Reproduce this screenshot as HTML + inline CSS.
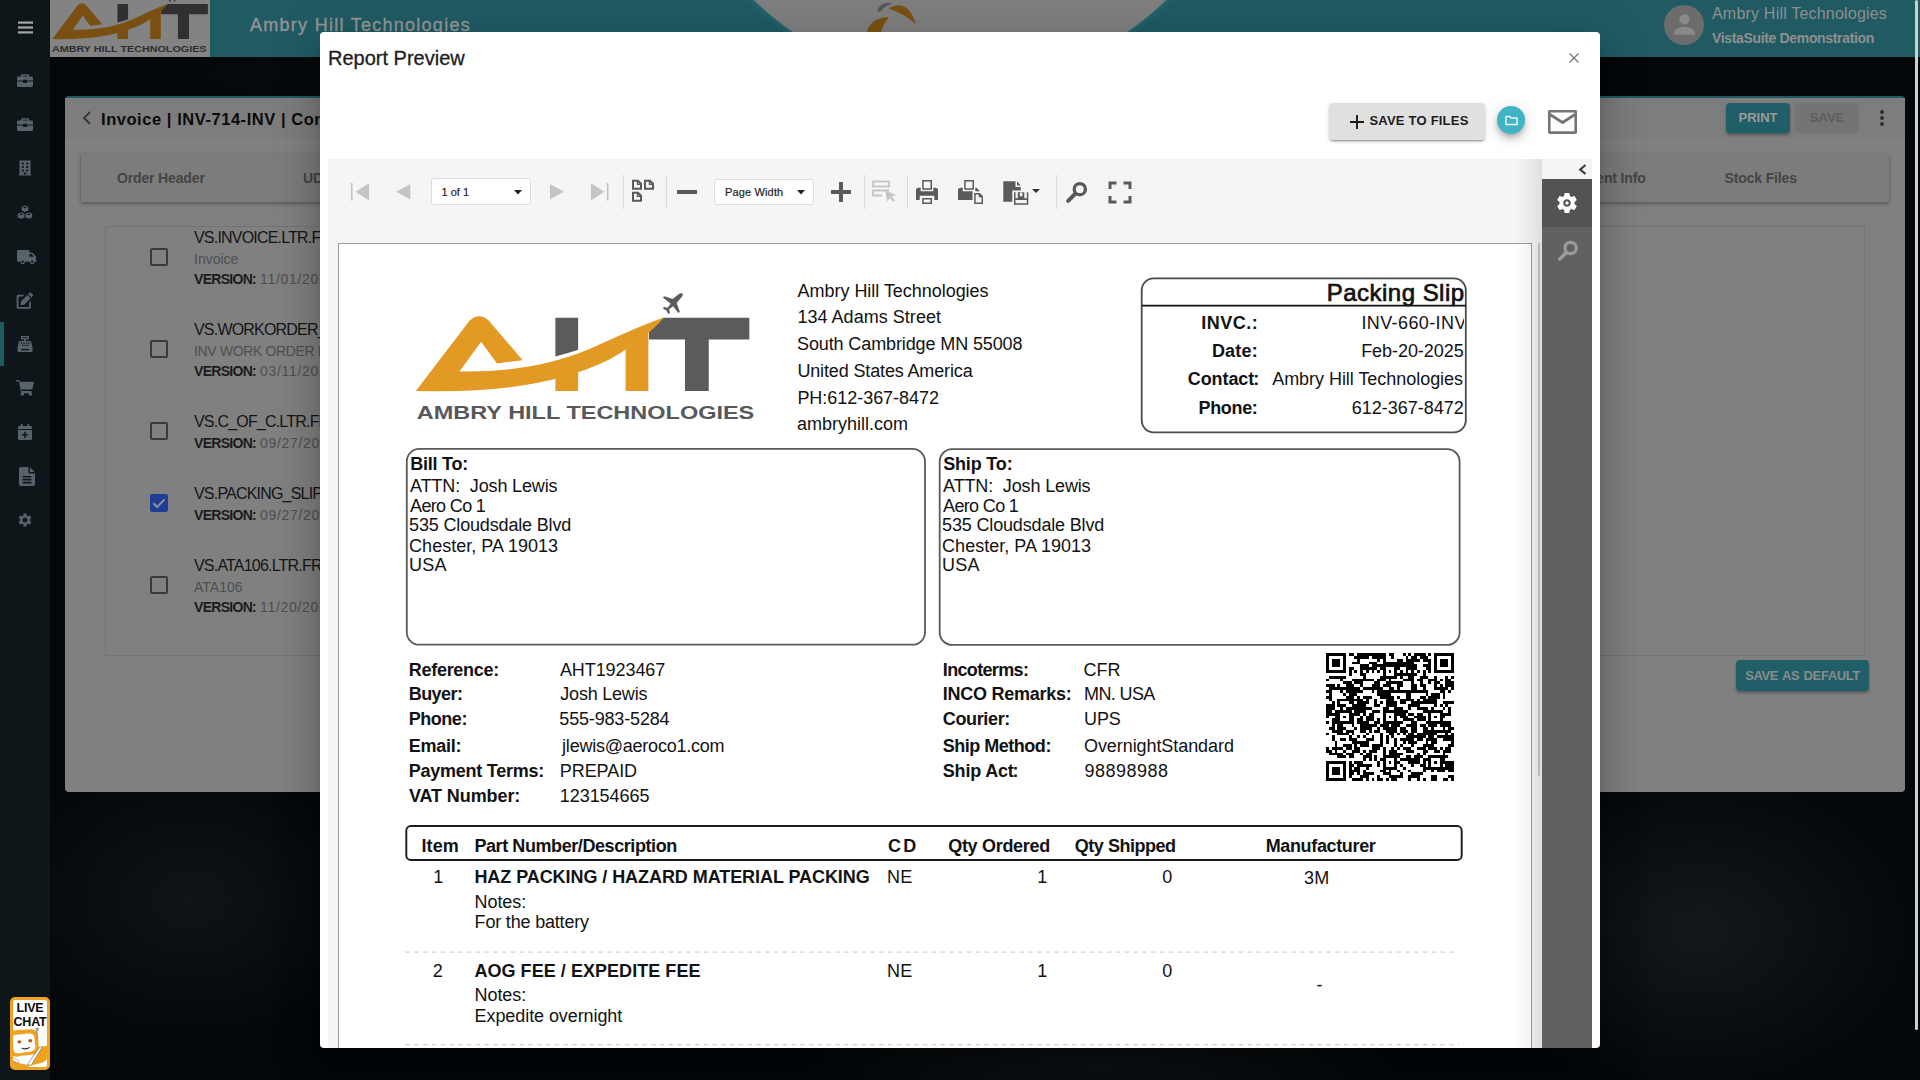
<!DOCTYPE html>
<html lang="en">
<head>
<meta charset="utf-8">
<title>Report Preview</title>
<style>
*{box-sizing:border-box;margin:0;padding:0}
html,body{width:1920px;height:1080px;overflow:hidden;background:#06090b;font-family:"Liberation Sans",sans-serif}
.abs{position:absolute}
#bg{position:absolute;left:0;top:0;width:1920px;height:1080px;background:
 radial-gradient(ellipse 230px 170px at 1700px 930px,#14181a 0%,rgba(10,13,15,0) 100%),
 radial-gradient(ellipse 200px 150px at 190px 900px,#101416 0%,rgba(6,9,11,0) 100%),
 radial-gradient(ellipse 300px 60px at 1100px 1062px,#0e1214 0%,rgba(6,9,11,0) 100%),
 radial-gradient(ellipse 500px 50px at 600px 75px,#0c1012 0%,rgba(6,9,11,0) 100%),
 #04070a}
#side{position:absolute;left:0;top:0;width:50px;height:1080px;background:#0f161a}
#hdr{position:absolute;left:50px;top:0;width:1870px;height:57px;background:#205b63;overflow:hidden}
#logoBox{position:absolute;left:0;top:0;width:160px;height:57px;background:#838383}
#hdrTitle{position:absolute;left:200px;top:15px;font-size:18px;color:#959595;white-space:nowrap;letter-spacing:1.27px;font-weight:400;-webkit-text-stroke:.35px #959595}
#card{position:absolute;left:65px;top:96px;width:1840px;height:696px;background:#808080;border-top:2px solid #1f5a63;border-radius:4px}
#cardHead{position:absolute;left:0;top:0;width:100%;height:40px;background:#7d7d7d}
#tabs{position:absolute;left:16px;top:56px;width:1808px;height:48px;background:#7c7c7c;box-shadow:0 2px 4px rgba(0,0,0,.28),0 0 2px rgba(0,0,0,.15)}
.tab{position:absolute;top:16px;font-size:14px;font-weight:700;color:#444;white-space:nowrap;letter-spacing:-.15px}
#list{position:absolute;left:40px;top:128px;width:1760px;height:430px;border:1px solid #747474}
.cb{position:absolute;margin-top:-1px;left:44px;width:18px;height:18px;border:2px solid #3a3a3a;border-radius:2px}
.cb.on{background:#1c3f95;border-color:#1c3f95}
.li{position:absolute;left:88px;white-space:nowrap}
.li.t{font-size:16px;color:#151515;letter-spacing:-.8px;margin-top:1px}
.li.s{font-size:14px;color:#4f4f4f}
.li.v{font-size:14px;color:#4f4f4f}
.li.v b{color:#1b1b1b}
.btn{position:absolute;font-weight:700;font-size:14px;text-align:center;border-radius:4px;white-space:nowrap}
#modal{position:absolute;left:320px;top:32px;width:1280px;height:1016px;background:#fff;border-radius:4px;overflow:hidden;
 box-shadow:0 11px 15px -7px rgba(0,0,0,.2),0 24px 38px 3px rgba(0,0,0,.14),0 9px 46px 8px rgba(0,0,0,.12)}
#mshadow{position:absolute;left:320px;top:32px;width:1280px;height:1016px;border-radius:4px;
 box-shadow:0 11px 15px -7px rgba(0,0,0,.2),0 24px 38px 3px rgba(0,0,0,.14),0 9px 46px 8px rgba(0,0,0,.12)}
#mtitle{position:absolute;left:328px;top:47px;font-size:20px;color:#1d1d1d;white-space:nowrap;-webkit-text-stroke:.3px #1d1d1d}
#cardTitle{left:36px;top:12px;font-size:16.500px;font-weight:700;color:#0b0b0b;white-space:nowrap;letter-spacing:.55px}
.li.v b{letter-spacing:-.7px;font-weight:700}
#mw{position:absolute;left:-320px;top:-32px;width:1920px;height:1080px}
#viewer{position:absolute;left:328px;top:159px;width:1264px;height:889px;background:#f5f5f5;overflow:hidden}
#viewer>div{position:absolute}
#tbar{left:-328px;top:-159px;width:1920px;height:1080px}
#page{left:10px;top:84px;width:1194px;height:900px;background:#fff;border:1px solid #9d9d9d}
.sep{top:175px;width:1px;height:34px;background:#dadada}
.sel{background:#fff;border:1px solid #dcdcdc;border-radius:3px;font-size:11px;color:#222}
.sel span{position:absolute;top:6px;white-space:nowrap;-webkit-text-stroke:.2px #222}
#rp{position:absolute;left:-339px;top:-244px;width:1920px;height:1080px}
.rt{position:absolute;white-space:pre;color:#121212}
.ps{-webkit-text-stroke:.7px #121212;height:26.500px;overflow:hidden;width:150px}
#rpanel{left:1214px;top:0;width:50px;height:889px;background:#616161}
</style>
</head>
<body>

<div id="bg"></div>

<!-- HEADER -->
<div id="hdr">
  <div id="logoBox">
   <svg class="dim abs" style="left:-4.900px;top:-14.300px" width="177.200" height="76.400" viewBox="0 0 1920 808" preserveAspectRatio="none"><path fill="#303031" d="M785 190H900V352Q842 372 785 386Z"/>
   <path fill="#303031" d="M1332 190H1765V300H1560V560H1440V300H1258V247Q1296 222 1332 190Z"/>
   <path fill="#303031" d="M1328 88l8-6 42 14 26-22q14-10 24-6 4 10-8 22l-22 26 16 44-8 6-26-34-20 16 4 18-8 6-10-18-18-10 6-8 18 4 16-20z"/>
   <path fill="#7a5012" d="M785 480L900 450V560H785Z"/>
   <path fill="#7a5012" d="M1140 352Q1200 312 1255 262V560H1140Z"/>
   <path fill="#7a5012" fill-rule="evenodd" d="M80 560L352 205Q400 160 448 205L620 405L490 422L410 312L300 462Q700 470 1000 330Q1180 245 1335 188Q1240 300 1060 400Q700 580 80 560Z"/>
    <text x="75" y="700" font-family="Liberation Sans, sans-serif" font-weight="700" font-size="93" textLength="1675" lengthAdjust="spacingAndGlyphs" fill="#2e2e2f">AMBRY HILL TECHNOLOGIES</text></svg>
  </div>
  <div id="hdrTitle">Ambry Hill Technologies</div>
  <div class="abs" style="left:615px;top:-506px;width:590px;height:590px;border-radius:50%;background:#7f7f7f;box-shadow:0 0 6px 1px #2b6e78"></div>
  <svg class="abs" style="left:812px;top:0" width="60" height="57" viewBox="0 0 60 57">
    <path d="M15 11.500Q19 0.500 30.500 3.500Q23 5.500 18.500 11.500Z" fill="#555"/>
    <path d="M26.500 8.500Q46 -2.500 53.500 24Q42 13.500 26.500 8.500Z" fill="#7a5113"/>
    <path d="M27 17Q2 18 4 44Q12 60 30 52Q8 42 27 17Z" fill="#7a5113"/>
  </svg>
  <div class="abs" style="left:1614px;top:5px;width:40px;height:40px;border-radius:50%;background:#6c6c6c"></div>
  <svg class="abs" style="left:1618.500px;top:9px" width="31" height="31" viewBox="0 0 24 24" fill="#8a8a8a"><path d="M12 12c2.210 0 4-1.790 4-4s-1.790-4-4-4-4 1.790-4 4 1.790 4 4 4zm0 2c-2.670 0-8 1.340-8 4v2h16v-2c0-2.660-5.330-4-8-4z"/></svg>
  <div class="abs" style="left:1662px;top:5px;font-size:16px;color:#8f8f8f;white-space:nowrap;letter-spacing:.2px">Ambry Hill Technologies</div>
  <div class="abs" style="left:1662px;top:30px;font-size:14px;font-weight:700;color:#8f8f8f;white-space:nowrap;letter-spacing:-.34px">VistaSuite Demonstration</div>
</div>

<!-- SIDEBAR -->
<div id="side">
<svg class="abs" style="left:17.5px;top:21px" width="15" height="13" viewBox="0 0 15 13"><rect x="0" y="0.500" width="15" height="2.200" fill="#a4a7a9"/><rect x="0" y="5.400" width="15" height="2.200" fill="#a4a7a9"/><rect x="0" y="10.300" width="15" height="2.200" fill="#a4a7a9"/></svg>
<svg class="abs" style="left:17.0px;top:72.0px" width="16" height="16" viewBox="0 0 16 16" fill="#57636b"><path d="M5 2.2h6a1 1 0 0 1 1 1V4.5h2.6a1.4 1.4 0 0 1 1.4 1.4V8.5H10v-.8H6v.8H0V5.9a1.4 1.4 0 0 1 1.4-1.4H4V3.200a1 1 0 0 1 1-1zM5.600 3.700v.8h4.800v-.8zM0 9.600h6v1.400h4V9.600h6v4a1.400 1.400 0 0 1-1.400 1.400H1.400A1.400 1.400 0 0 1 0 13.600z"/></svg>
<svg class="abs" style="left:17.0px;top:116.0px" width="16" height="16" viewBox="0 0 16 16" fill="#57636b"><path d="M5 2.2h6a1 1 0 0 1 1 1V4.5h2.6a1.4 1.4 0 0 1 1.4 1.4V8.5H10v-.8H6v.8H0V5.9a1.4 1.4 0 0 1 1.4-1.4H4V3.200a1 1 0 0 1 1-1zM5.600 3.700v.8h4.800v-.8zM0 9.600h6v1.400h4V9.600h6v4a1.400 1.400 0 0 1-1.400 1.400H1.400A1.400 1.400 0 0 1 0 13.600z"/></svg>
<svg class="abs" style="left:18.0px;top:160.0px" width="14" height="16" viewBox="1 0 14 16" fill="#57636b"><path fill-rule="evenodd" d="M2.500 0.500h11v14h0.800v1h-12.600v-1h0.800zM4.800 2.500v2h2v-2zM9.200 2.500v2h2v-2zM4.800 6v2h2v-2zM9.200 6v2h2v-2zM4.800 9.500v2h2v-2zM9.200 9.500v2h2v-2zM6.700 12.500v2h2.600v-2z"/></svg>
<svg class="abs" style="left:17.0px;top:204.5px" width="16" height="15" viewBox="0 0 16 15" fill="#57636b"><path d="M8 0.600l3.300 1.300v3.600l-3.300 1.400-3.300-1.400V1.900zM8 1.700l-2.100 .8 2.100 .9 2.100-.9zM4.200 7.400l3.300 1.300v3.700l-3.300 1.400-3.400-1.400V8.700zM4.200 8.500l-2.100 .8 2.100 .9 2.100-.9zM11.800 7.400l3.400 1.300v3.700l-3.400 1.400-3.300-1.400V8.700zM11.800 8.500l-2.100 .8 2.100 .9 2.100-.9z" fill-rule="evenodd"/></svg>
<svg class="abs" style="left:15.5px;top:248.0px" width="22" height="16" viewBox="0 0 20 16" fill="#57636b"><path d="M1.200 2h10a1.200 1.200 0 0 1 1.200 1.200V4.500h2.400a1.500 1.500 0 0 1 1.100 .5l2.600 2.700a1.500 1.500 0 0 1 .5 1.100V12.500h0.700v1.300h-2.200a2.300 2.300 0 0 1-4.600 0H8a2.300 2.300 0 0 1-4.600 0H1.200A1.200 1.200 0 0 1 0 12.600V3.200A1.200 1.200 0 0 1 1.200 2zM12.400 6v2.800h4.700l-2.500-2.800zM5.700 12.600a1.150 1.150 0 1 0 0 2.300 1.150 1.150 0 0 0 0-2.300zM15.200 12.600a1.150 1.150 0 1 0 0 2.300 1.150 1.150 0 0 0 0-2.300z" fill-rule="evenodd"/></svg>
<svg class="abs" style="left:16px;top:291.5px" width="18" height="17" viewBox="0 0 16.500 16.500" fill="#57636b"><path d="M12.300 0.900a1.500 1.500 0 0 1 2.100 0l1.200 1.200a1.500 1.500 0 0 1 0 2.100l-1.100 1.100-3.300-3.300zM10.400 2.800l3.300 3.300-6.200 6.200-3.600 .600 .500-3.700zM1.600 2.600h6.200l-1.700 1.700H1.900v10.300h10.300v-4.300l1.700-1.700v6.100a1.500 1.500 0 0 1-1.500 1.500H1.600A1.500 1.500 0 0 1 .1 14.700V4.100a1.500 1.500 0 0 1 1.500-1.500z"/></svg>
<div class="abs" style="left:0;top:322px;width:4px;height:44px;background:#1f5a63"></div>
<svg class="abs" style="left:17.0px;top:336.0px" width="16" height="16" viewBox="0 0 16 16" fill="#57636b"><path fill-rule="evenodd" d="M4.500 0h7a.5 .5 0 0 1 .5 .5v2.500a.5 .5 0 0 1-.5 .5H9v1.500h4.200a1 1 0 0 1 1 .8l1.300 5.700V15a1 1 0 0 1-1 1H1.500a1 1 0 0 1-1-1v-3.500l1.300-5.700a1 1 0 0 1 1-.8H7V3.500H4.500A.5 .5 0 0 1 4 3V.5A.5 .5 0 0 1 4.500 0zM5.500 1.200v1.100h5V1.200zM3.800 6.500v1.200h1.400V6.500zM6.300 6.500v1.200h1.400V6.500zM8.800 6.500v1.200h1.400V6.500zM11.300 6.500v1.200h1.400V6.500zM5 8.800v1.200h1.400V8.800zM7.500 8.800v1.200h1.400V8.800zM10 8.800v1.200h1.400V8.800zM4 13v1.200h8V13z"/></svg>
<svg class="abs" style="left:16px;top:380.0px" width="18" height="16" viewBox="0 0 18 16" fill="#57636b"><path d="M0 .7A.7 .7 0 0 1 .7 0h2.100a.7 .7 0 0 1 .7 .6L3.700 1.800H17.200a.7 .7 0 0 1 .7 .9l-1.500 6.200a.7 .7 0 0 1-.7 .6H5.200l.3 1.500h9.400a.7 .7 0 0 1 .7 .9l-.2 .7a1.700 1.700 0 1 1-2.600 .6H7.900a1.700 1.700 0 1 1-2.700-.5L3 1.500H.7A.7 .7 0 0 1 0 .7z"/></svg>
<svg class="abs" style="left:17px;top:424.0px" width="16" height="16" viewBox="0 0 16 16" fill="#57636b"><path fill-rule="evenodd" d="M3.800 0h1.800v2h4.800V0h1.800v2h1.500a1.300 1.300 0 0 1 1.300 1.300V5H1V3.300A1.300 1.300 0 0 1 2.300 2H3.800zM1 6h14v8.700a1.300 1.300 0 0 1-1.300 1.300H2.300A1.300 1.300 0 0 1 1 14.700zM7.200 7.700v2.300H4.900v1.600h2.300v2.300h1.600v-2.300h2.300V10H8.800V7.700z"/></svg>
<svg class="abs" style="left:19px;top:466.5px" width="16" height="19" viewBox="0 0 13.500 16" fill="#57636b"><path fill-rule="evenodd" d="M1.500 0h6.500v4.500a1 1 0 0 0 1 1H13.500V14.500a1.500 1.500 0 0 1-1.500 1.500H1.500A1.500 1.500 0 0 1 0 14.500V1.500A1.500 1.500 0 0 1 1.500 0zM9.200 0.200l4.100 4.100H9.200zM3 7.500v1.400h7.500V7.500zM3 10v1.400h7.500V10zM3 12.500v1.400h7.500v-1.400z"/></svg>
<svg class="abs" style="left:17.0px;top:512.0px" width="16" height="16" viewBox="0 0 16 16" fill="#57636b"><path fill-rule="evenodd" d="M6.600 0h2.800l.4 2.100 1.200 .7 2-.7 1.400 2.400-1.600 1.400v1.400l1.600 1.400-1.400 2.400-2-.7-1.200 .7-.4 2.100H6.600l-.4-2.100-1.200-.7-2 .7-1.400-2.400 1.600-1.400V5.900L1.600 4.500 3 2.100l2 .7 1.200-.7zM8 4.100a2.500 2.500 0 1 0 0 5 2.500 2.500 0 0 0 0-5z" transform="translate(0 1.400)"/></svg>
</div>

<!-- CARD -->
<div id="card">
  <div id="cardHead"></div>
  <svg class="abs" style="left:16px;top:12px" width="12" height="16" viewBox="0 0 12 16" fill="none" stroke="#333" stroke-width="1.800"><path d="M9 2L3 8l6 6"/></svg>
  <div class="abs" id="cardTitle">Invoice | INV-714-INV | Complete</div>
  <div class="btn" style="left:1661px;top:5px;width:64px;height:30px;line-height:30px;background:#205e68;color:#9a9a9a;font-size:13px;box-shadow:0 2px 3px rgba(0,0,0,.3)">PRINT</div>
  <div class="btn" style="left:1730px;top:5px;width:64px;height:30px;line-height:30px;background:#747474;color:#5c5c5c;font-size:13px">SAVE</div>
  <svg class="abs" style="left:1813px;top:11px" width="8" height="18" viewBox="0 0 8 18" fill="#2b2b2b"><circle cx="4" cy="3" r="1.900"/><circle cx="4" cy="9" r="1.900"/><circle cx="4" cy="15" r="1.900"/></svg>
  <div id="tabs">
    <div class="tab" style="left:36px">Order Header</div>
    <div class="tab" style="left:222px">UDF</div>
    <div class="tab" style="left:1478.500px">Payment Info</div>
    <div class="tab" style="left:1643.600px">Stock Files</div>
  </div>
  <div id="list">
    <div class="cb" style="top:22px"></div>
    <div class="li t" style="top:1px">VS.INVOICE.LTR.FRX</div>
    <div class="li s" style="top:24px">Invoice</div>
    <div class="li v" style="top:44px"><b>VERSION:</b> <span style="letter-spacing:.7px">11/01/2024</span></div>
    <div class="cb" style="top:114px"></div>
    <div class="li t" style="top:93px">VS.WORKORDER_INV.LTR.FRX</div>
    <div class="li s" style="top:116px;letter-spacing:-.35px">INV WORK ORDER INVOICE</div>
    <div class="li v" style="top:136px"><b>VERSION:</b> <span style="letter-spacing:.7px">03/11/2024</span></div>
    <div class="cb" style="top:196px"></div>
    <div class="li t" style="top:185px">VS.C_OF_C.LTR.FRX</div>
    <div class="li v" style="top:208px"><b>VERSION:</b> <span style="letter-spacing:.7px">09/27/2024</span></div>
    <div class="cb on" style="top:268px"><svg class="abs" style="left:-2px;top:-2px" width="18" height="18" viewBox="0 0 18 18" fill="none" stroke="#8f8f8f" stroke-width="2"><path d="M3.500 9.300l3.700 3.700 7.300-7.600"/></svg></div>
    <div class="li t" style="top:257px">VS.PACKING_SLIP.LTR.FRX</div>
    <div class="li v" style="top:280px"><b>VERSION:</b> <span style="letter-spacing:.7px">09/27/2024</span></div>
    <div class="cb" style="top:350px"></div>
    <div class="li t" style="top:329px">VS.ATA106.LTR.FRX</div>
    <div class="li s" style="top:352px">ATA106</div>
    <div class="li v" style="top:372px"><b>VERSION:</b> <span style="letter-spacing:.7px">11/20/2024</span></div>
  </div>
  <div class="btn" style="left:1671px;top:562px;width:133px;height:31px;line-height:31px;letter-spacing:-.4px;word-spacing:1.200px;background:#205e68;color:#8b8b8b;font-size:13px;box-shadow:0 2px 3px rgba(0,0,0,.3)">SAVE AS DEFAULT</div>
</div>

<!-- MODAL -->
<div id="modal">
 <div id="mw">
  <div id="mtitle">Report Preview</div>
  <svg class="abs" style="left:1569px;top:53px" width="10" height="10" viewBox="0 0 10 10" stroke="#707070" stroke-width="1.100" fill="none"><path d="M.5 .5l9 9M9.500 .5l-9 9"/></svg>
  <!-- save to files -->
  <div class="abs" style="left:1329px;top:103px;width:156px;height:36.500px;background:#e0e0e0;border-radius:4px;box-shadow:0 3px 1px -2px rgba(0,0,0,.2),0 2px 2px 0 rgba(0,0,0,.14),0 1px 5px 0 rgba(0,0,0,.12)"></div>
  <svg class="abs" style="left:1350px;top:115px" width="14" height="14" viewBox="0 0 14 14" stroke="#1a1a1a" stroke-width="1.900" fill="none"><path d="M7 0v14M0 7h14"/></svg>
  <div class="abs" style="left:1369.400px;top:113px;font-size:13px;font-weight:700;color:#1c1c1c;letter-spacing:.22px;white-space:nowrap">SAVE TO FILES</div>
  <div class="abs" style="left:1497px;top:106px;width:28px;height:28px;border-radius:50%;background:#40b3c4;box-shadow:0 3px 5px -1px rgba(0,0,0,.2),0 6px 10px 0 rgba(0,0,0,.14),0 1px 18px 0 rgba(0,0,0,.12)"></div>
  <svg class="abs" style="left:1504.500px;top:114.500px" width="13" height="11" viewBox="0 0 13 11" fill="none" stroke="#e8f6f8" stroke-width="1.500" stroke-linejoin="round"><path d="M1 1.500h3.800l1.200 1.400h6v6.600h-11z"/></svg>
  <svg class="abs" style="left:1548px;top:109.500px" width="29" height="24" viewBox="0 0 29 24" fill="none" stroke="#757575" stroke-width="2.800" stroke-linejoin="round"><rect x="1.200" y="1.200" width="26.600" height="21.400" rx="1"/><path d="M2 4.500l12.500 8 12.500-8"/></svg>

  <!-- viewer -->
  <div id="viewer">
   <div id="tbar">
    <!-- first -->
    <svg class="abs" style="left:350px;top:182px" width="20" height="20" viewBox="0 0 20 20" fill="#c4c4c4"><rect x="0.900" y="1" width="1.700" height="17.500"/><path d="M19 1.200v17l-13.500-8.500z"/></svg>
    <!-- prev -->
    <svg class="abs" style="left:396px;top:182px" width="16" height="20" viewBox="0 0 16 20" fill="#c4c4c4"><path d="M14.300 2v15.600l-14-7.800z"/></svg>
    <!-- page select -->
    <div class="abs sel" style="left:430.500px;top:178px;width:100px;height:26.500px"><span style="left:10px;top:7px">1 of 1</span></div>
    <svg class="abs" style="left:514px;top:190px" width="8" height="5" viewBox="0 0 8 5" fill="#222"><path d="M0 0h8l-4 4.500z"/></svg>
    <!-- next -->
    <svg class="abs" style="left:549px;top:182px" width="16" height="20" viewBox="0 0 16 20" fill="#c4c4c4"><path d="M.9 2v15.600l14-7.800z"/></svg>
    <!-- last -->
    <svg class="abs" style="left:590px;top:182px" width="20" height="20" viewBox="0 0 20 20" fill="#c4c4c4"><rect x="16.800" y="1" width="1.700" height="17.500"/><path d="M1 1.200v17l13.500-8.500z"/></svg>
    <div class="abs sep" style="left:623px"></div>
    <!-- multipage -->
    <svg class="abs" style="left:631px;top:179px" width="24" height="24" viewBox="0 0 24 24" fill="none" stroke="#5a5a5a" stroke-width="2"><path d="M2 2h5l3 3v5h-8zM14 2h5l3 3v5h-8zM2 14h5l3 3v5h-8z" transform="translate(0 -.3)"/><path d="M6.500 2v3.500h3.500M18.500 2v3.500h3.500M6.500 14v3.500h3.500" transform="translate(0 -.3)" stroke-width="1.400"/></svg>
    <div class="abs sep" style="left:666px"></div>
    <!-- minus -->
    <div class="abs" style="left:677px;top:190px;width:20px;height:4px;background:#5a5a5a"></div>
    <!-- zoom select -->
    <div class="abs sel" style="left:714px;top:178.500px;width:99.500px;height:26px"><span style="left:10px;top:6.500px;letter-spacing:.15px">Page Width</span></div>
    <svg class="abs" style="left:797px;top:190px" width="8" height="5" viewBox="0 0 8 5" fill="#222"><path d="M0 0h8l-4 4.500z"/></svg>
    <!-- plus -->
    <svg class="abs" style="left:831px;top:182px" width="20" height="20" viewBox="0 0 20 20" fill="#5a5a5a"><rect x="0" y="8" width="20" height="4"/><rect x="8" y="0" width="4" height="20"/></svg>
    <div class="abs sep" style="left:863.500px"></div>
    <!-- select (disabled) -->
    <svg class="abs" style="left:871px;top:180px" width="26" height="23" viewBox="0 0 26 23" fill="none" stroke="#c4c4c4" stroke-width="1.800"><rect x="2" y="1.500" width="16" height="5"/><path d="M11 15.500h-9v-5h16"/><path d="M14.500 10.500l10.500 4.500-4.300 1.600 3.300 4-1.800 1.500-3.300-4-2.900 3.400z" fill="#c4c4c4" stroke="none"/></svg>
    <div class="abs sep" style="left:907px"></div>
    <!-- print -->
    <svg class="abs" style="left:916px;top:180px" width="22" height="24" viewBox="0 0 22 24" fill="#5a5a5a"><path fill-rule="evenodd" d="M6.200 .1h9.800v9.700h-9.800zM7.700 1.600v6.700h6.800V1.600zM2.500 7.800h2.200v3.500h12.600V7.800h2.200a2.500 2.500 0 0 1 2.500 2.500V20H18.300v-4.200H3.700V20H0V10.300A2.500 2.500 0 0 1 2.500 7.800zM6.200 18h9.800v6h-9.800zM7.700 19.500v3h6.800v-3z"/></svg>
    <!-- print page -->
    <svg class="abs" style="left:958px;top:180px" width="26" height="24" viewBox="0 0 26 24" fill="#5a5a5a"><path fill-rule="evenodd" d="M6.200 .1h9.800v9.700h-9.800zM7.700 1.600v6.700h6.800V1.600zM2.500 7.800h2.200v3.500h12.600V7.800h1.200l3.500 3.500H14.500V20H0V10.300A2.500 2.500 0 0 1 2.500 7.800zM16.200 13h5.600l3.200 3.200V24h-8.800zM17.700 14.500v8h5.800v-5.300h-2.700v-2.700z"/></svg>
    <!-- export -->
    <svg class="abs" style="left:1003px;top:180px" width="26" height="25" viewBox="0 0 26 25" fill="#5a5a5a"><path fill-rule="evenodd" d="M.3 1.200h12.200v5.800h5.300v3.500H9.300V21.700H.3zM14 1.200l3.800 4.300H14zM11 12.300h14.300v12.500H11zM12.500 12.300v6h2.300v-6zM21.300 12.300v6h2.500v-6zM16.800 12.800v3.500h2.700v-3.500zM12.500 20v3.300h11.300V20z"/></svg>
    <svg class="abs" style="left:1031.500px;top:189px" width="8" height="4" viewBox="0 0 8 4" fill="#333"><path d="M0 0h8l-4 4z"/></svg>
    <div class="abs sep" style="left:1056px"></div>
    <!-- search -->
    <svg class="abs" style="left:1066px;top:181px" width="22" height="22" viewBox="0 0 22 22" fill="none" stroke="#5a5a5a"><circle cx="13.800" cy="8.200" r="5.600" stroke-width="3.400"/><path d="M9.500 12.500l-7.300 7.300" stroke-width="4" stroke-linecap="round"/></svg>
    <!-- fullscreen -->
    <svg class="abs" style="left:1108px;top:181px" width="24" height="23" viewBox="0 0 24 23" fill="none" stroke="#5a5a5a" stroke-width="3"><path d="M2 8V2h6.500M15.500 2H22v6M22 15v6h-6.500M8.500 21H2v-6"/></svg>
   </div>
<div id="rpanel">
    <div class="abs" style="left:0;top:0;width:50px;height:20.300px;background:#f5f5f5"></div>
    <svg class="abs" style="left:36px;top:4.500px" width="9" height="11" viewBox="0 0 9 11" fill="none" stroke="#3c3c3c" stroke-width="2.200"><path d="M7.500 1L2.300 5.500l5.200 4.500"/></svg>
    <div class="abs" style="left:0;top:20.300px;width:50px;height:47.500px;background:#535353"></div>
    <svg class="abs" style="left:13px;top:32px" width="24" height="24" viewBox="0 0 24 24" fill="#fff"><path fill-rule="evenodd" d="M19.430 12.980c.04-.32.070-.64.070-.98s-.03-.66-.07-.98l2.110-1.650c.19-.15.240-.42.120-.64l-2-3.460c-.12-.22-.39-.3-.61-.22l-2.490 1c-.52-.4-1.080-.73-1.690-.98l-.38-2.650C14.460 2.180 14.250 2 14 2h-4c-.25 0-.46.180-.49.420l-.38 2.650c-.61.250-1.170.59-1.690.98l-2.490-1c-.23-.09-.49 0-.61.220l-2 3.460c-.13.220-.07.490.12.640l2.110 1.650c-.04.320-.07.650-.07.980s.03.660.07.980l-2.110 1.650c-.19.150-.24.420-.12.640l2 3.460c.12.220.39.300.61.220l2.490-1c.52.400 1.080.73 1.690.98l.38 2.650c.03.240.24.420.49.420h4c.25 0 .46-.18.490-.42l.38-2.650c.61-.25 1.170-.59 1.690-.98l2.490 1c.23.090.49 0 .61-.22l2-3.460c.12-.22.070-.49-.12-.64l-2.110-1.650zM12 15.800c-2.100 0-3.800-1.700-3.800-3.800s1.700-3.800 3.800-3.800 3.800 1.700 3.800 3.800-1.700 3.800-3.800 3.800zM12 10.300a1.700 1.700 0 1 0 0 3.400 1.700 1.700 0 0 0 0-3.400z"/></svg>
    <svg class="abs" style="left:14.500px;top:81px" width="22" height="22" viewBox="0 0 22 22" fill="none" stroke="#9b9b9b"><circle cx="13.600" cy="8" r="5.700" stroke-width="3.200"/><path d="M9.300 12.500l-6.500 6.600" stroke-width="3.600" stroke-linecap="round"/></svg>
   </div>
   <div class="abs" style="left:1209.500px;top:84px;width:2.500px;height:533px;background:#c9c9c9;border-radius:1px"></div>
   <div id="page"><div id="rp">
<!--RG-START-->
<svg class="abs" style="left:0;top:0" width="1920" height="1080" viewBox="0 0 1920 1080" fill="none">
 <rect x="1141.700" y="278.300" width="324.100" height="154" rx="12" stroke="#4a4a4a" stroke-width="1.800"/>
 <path d="M1141.700 305.600H1465.800" stroke="#111" stroke-width="1.900"/>
 <rect x="406.800" y="448.900" width="518.200" height="195.800" rx="12.500" stroke="#5a5a5a" stroke-width="1.800"/>
 <rect x="939.700" y="449.100" width="519.900" height="195.800" rx="12.500" stroke="#5a5a5a" stroke-width="1.800"/>
 <rect x="406.300" y="826" width="1055.400" height="34" rx="4.500" stroke="#1c1c1c" stroke-width="1.900"/>
 <path d="M405.600 952.100H1459M405.600 1044.600H1459" stroke="#d2d2d2" stroke-width="1.400" stroke-dasharray="4.400 4.370"/>
</svg>
<svg class="abs" style="left:400px;top:280px" width="380" height="160" viewBox="0 0 1920 808"><path fill="#5b5b5d" d="M785 190H900V352Q842 372 785 386Z"/>
   <path fill="#5b5b5d" d="M1332 190H1765V300H1560V560H1440V300H1258V247Q1296 222 1332 190Z"/>
   <path fill="#5b5b5d" d="M1328 88l8-6 42 14 26-22q14-10 24-6 4 10-8 22l-22 26 16 44-8 6-26-34-20 16 4 18-8 6-10-18-18-10 6-8 18 4 16-20z"/>
   <path fill="#e39a25" d="M785 480L900 450V560H785Z"/>
   <path fill="#e39a25" d="M1140 352Q1200 312 1255 262V560H1140Z"/>
   <path fill="#e39a25" fill-rule="evenodd" d="M80 560L352 205Q400 160 448 205L620 405L490 422L410 312L300 462Q700 470 1000 330Q1180 245 1335 188Q1240 300 1060 400Q700 580 80 560Z"/>
<text x="85" y="700" font-family="Liberation Sans, sans-serif" font-weight="700" font-size="93" textLength="1705" lengthAdjust="spacingAndGlyphs" fill="#58585a">AMBRY HILL TECHNOLOGIES</text></svg>
<svg class="abs" style="left:1326px;top:653px" width="128" height="128" viewBox="0 0 45 45" shape-rendering="crispEdges"><path fill="#000" d="M0 0h7v1h-7zM8 0h2v1h-2zM11 0h10v1h-10zM22 0h2v1h-2zM27 0h1v1h-1zM29 0h1v1h-1zM31 0h4v1h-4zM36 0h1v1h-1zM38 0h7v1h-7zM0 1h1v1h-1zM6 1h1v1h-1zM10 1h5v1h-5zM16 1h5v1h-5zM23 1h1v1h-1zM28 1h1v1h-1zM30 1h2v1h-2zM33 1h3v1h-3zM38 1h1v1h-1zM44 1h1v1h-1zM0 2h1v1h-1zM2 2h3v1h-3zM6 2h1v1h-1zM11 2h1v1h-1zM18 2h1v1h-1zM20 2h1v1h-1zM25 2h2v1h-2zM28 2h5v1h-5zM34 2h3v1h-3zM38 2h1v1h-1zM40 2h3v1h-3zM44 2h1v1h-1zM0 3h1v1h-1zM2 3h3v1h-3zM6 3h1v1h-1zM9 3h3v1h-3zM15 3h3v1h-3zM20 3h11v1h-11zM36 3h1v1h-1zM38 3h1v1h-1zM40 3h3v1h-3zM44 3h1v1h-1zM0 4h1v1h-1zM2 4h3v1h-3zM6 4h1v1h-1zM12 4h3v1h-3zM16 4h16v1h-16zM34 4h3v1h-3zM38 4h1v1h-1zM40 4h3v1h-3zM44 4h1v1h-1zM0 5h1v1h-1zM6 5h1v1h-1zM8 5h2v1h-2zM12 5h6v1h-6zM19 5h2v1h-2zM24 5h2v1h-2zM28 5h4v1h-4zM35 5h2v1h-2zM38 5h1v1h-1zM44 5h1v1h-1zM0 6h7v1h-7zM8 6h1v1h-1zM10 6h1v1h-1zM12 6h1v1h-1zM14 6h1v1h-1zM16 6h1v1h-1zM18 6h1v1h-1zM20 6h1v1h-1zM22 6h1v1h-1zM24 6h1v1h-1zM26 6h1v1h-1zM28 6h1v1h-1zM30 6h1v1h-1zM32 6h1v1h-1zM34 6h1v1h-1zM36 6h1v1h-1zM38 6h7v1h-7zM8 7h1v1h-1zM12 7h2v1h-2zM20 7h1v1h-1zM24 7h8v1h-8zM34 7h1v1h-1zM1 8h6v1h-6zM13 8h1v1h-1zM19 8h6v1h-6zM26 8h1v1h-1zM29 8h2v1h-2zM33 8h3v1h-3zM38 8h1v1h-1zM42 8h1v1h-1zM44 8h1v1h-1zM0 9h1v1h-1zM5 9h1v1h-1zM9 9h8v1h-8zM18 9h3v1h-3zM22 9h1v1h-1zM27 9h4v1h-4zM32 9h2v1h-2zM36 9h3v1h-3zM40 9h1v1h-1zM42 9h2v1h-2zM6 10h3v1h-3zM10 10h3v1h-3zM17 10h2v1h-2zM21 10h6v1h-6zM30 10h1v1h-1zM33 10h1v1h-1zM36 10h1v1h-1zM38 10h2v1h-2zM42 10h3v1h-3zM0 11h3v1h-3zM4 11h1v1h-1zM7 11h3v1h-3zM12 11h1v1h-1zM16 11h3v1h-3zM20 11h3v1h-3zM25 11h2v1h-2zM30 11h2v1h-2zM33 11h2v1h-2zM38 11h1v1h-1zM40 11h1v1h-1zM42 11h3v1h-3zM1 12h11v1h-11zM13 12h7v1h-7zM22 12h2v1h-2zM25 12h1v1h-1zM30 12h2v1h-2zM34 12h1v1h-1zM38 12h5v1h-5zM44 12h1v1h-1zM0 13h2v1h-2zM5 13h1v1h-1zM7 13h6v1h-6zM16 13h1v1h-1zM18 13h18v1h-18zM40 13h2v1h-2zM43 13h1v1h-1zM1 14h1v1h-1zM6 14h1v1h-1zM8 14h3v1h-3zM18 14h5v1h-5zM28 14h2v1h-2zM35 14h1v1h-1zM37 14h3v1h-3zM41 14h1v1h-1zM0 15h2v1h-2zM7 15h3v1h-3zM11 15h1v1h-1zM13 15h3v1h-3zM19 15h5v1h-5zM25 15h1v1h-1zM28 15h2v1h-2zM33 15h2v1h-2zM36 15h4v1h-4zM41 15h1v1h-1zM1 16h1v1h-1zM4 16h9v1h-9zM14 16h1v1h-1zM17 16h1v1h-1zM21 16h3v1h-3zM26 16h5v1h-5zM32 16h1v1h-1zM34 16h5v1h-5zM2 17h1v1h-1zM4 17h1v1h-1zM8 17h2v1h-2zM11 17h4v1h-4zM17 17h1v1h-1zM19 17h1v1h-1zM21 17h4v1h-4zM26 17h2v1h-2zM30 17h9v1h-9zM41 17h4v1h-4zM0 18h3v1h-3zM4 18h3v1h-3zM9 18h5v1h-5zM17 18h2v1h-2zM21 18h4v1h-4zM29 18h4v1h-4zM38 18h1v1h-1zM40 18h1v1h-1zM42 18h1v1h-1zM0 19h3v1h-3zM5 19h1v1h-1zM7 19h9v1h-9zM20 19h2v1h-2zM24 19h3v1h-3zM29 19h1v1h-1zM32 19h4v1h-4zM37 19h1v1h-1zM41 19h1v1h-1zM43 19h1v1h-1zM0 20h2v1h-2zM3 20h6v1h-6zM10 20h4v1h-4zM16 20h3v1h-3zM20 20h9v1h-9zM34 20h7v1h-7zM43 20h1v1h-1zM0 21h5v1h-5zM8 21h4v1h-4zM13 21h1v1h-1zM15 21h2v1h-2zM20 21h1v1h-1zM24 21h4v1h-4zM29 21h2v1h-2zM32 21h2v1h-2zM36 21h1v1h-1zM40 21h4v1h-4zM0 22h1v1h-1zM3 22h2v1h-2zM6 22h1v1h-1zM8 22h2v1h-2zM12 22h1v1h-1zM14 22h3v1h-3zM20 22h1v1h-1zM22 22h1v1h-1zM24 22h1v1h-1zM26 22h3v1h-3zM31 22h4v1h-4zM36 22h1v1h-1zM38 22h1v1h-1zM40 22h2v1h-2zM2 23h3v1h-3zM8 23h2v1h-2zM11 23h2v1h-2zM14 23h3v1h-3zM18 23h1v1h-1zM20 23h1v1h-1zM24 23h1v1h-1zM27 23h4v1h-4zM32 23h3v1h-3zM36 23h1v1h-1zM40 23h1v1h-1zM0 24h1v1h-1zM2 24h8v1h-8zM11 24h4v1h-4zM17 24h2v1h-2zM20 24h7v1h-7zM30 24h2v1h-2zM35 24h9v1h-9zM2 25h1v1h-1zM4 25h2v1h-2zM9 25h1v1h-1zM12 25h6v1h-6zM19 25h3v1h-3zM23 25h3v1h-3zM28 25h4v1h-4zM33 25h2v1h-2zM36 25h3v1h-3zM40 25h4v1h-4zM1 26h2v1h-2zM4 26h3v1h-3zM10 26h1v1h-1zM12 26h4v1h-4zM18 26h1v1h-1zM20 26h5v1h-5zM26 26h2v1h-2zM30 26h2v1h-2zM34 26h2v1h-2zM37 26h1v1h-1zM41 26h1v1h-1zM43 26h2v1h-2zM2 27h4v1h-4zM7 27h3v1h-3zM12 27h2v1h-2zM15 27h1v1h-1zM17 27h2v1h-2zM21 27h4v1h-4zM26 27h3v1h-3zM30 27h2v1h-2zM34 27h10v1h-10zM0 28h1v1h-1zM4 28h4v1h-4zM9 28h1v1h-1zM14 28h1v1h-1zM19 28h1v1h-1zM22 28h2v1h-2zM25 28h1v1h-1zM27 28h1v1h-1zM29 28h2v1h-2zM32 28h7v1h-7zM42 28h1v1h-1zM44 28h1v1h-1zM2 29h1v1h-1zM8 29h1v1h-1zM11 29h1v1h-1zM13 29h1v1h-1zM16 29h1v1h-1zM19 29h1v1h-1zM21 29h1v1h-1zM23 29h1v1h-1zM28 29h7v1h-7zM36 29h2v1h-2zM39 29h6v1h-6zM2 30h1v1h-1zM5 30h2v1h-2zM8 30h3v1h-3zM14 30h3v1h-3zM19 30h1v1h-1zM21 30h1v1h-1zM24 30h1v1h-1zM26 30h5v1h-5zM32 30h2v1h-2zM35 30h4v1h-4zM41 30h4v1h-4zM3 31h1v1h-1zM9 31h6v1h-6zM19 31h1v1h-1zM21 31h1v1h-1zM24 31h1v1h-1zM27 31h1v1h-1zM29 31h3v1h-3zM35 31h1v1h-1zM37 31h2v1h-2zM44 31h1v1h-1zM3 32h1v1h-1zM6 32h3v1h-3zM10 32h1v1h-1zM12 32h3v1h-3zM16 32h4v1h-4zM24 32h1v1h-1zM26 32h1v1h-1zM30 32h1v1h-1zM34 32h4v1h-4zM43 32h2v1h-2zM0 33h1v1h-1zM2 33h4v1h-4zM7 33h2v1h-2zM10 33h2v1h-2zM16 33h3v1h-3zM20 33h1v1h-1zM23 33h1v1h-1zM25 33h1v1h-1zM27 33h3v1h-3zM32 33h3v1h-3zM36 33h3v1h-3zM40 33h1v1h-1zM42 33h2v1h-2zM0 34h2v1h-2zM3 34h1v1h-1zM6 34h1v1h-1zM9 34h3v1h-3zM13 34h1v1h-1zM15 34h3v1h-3zM20 34h1v1h-1zM22 34h3v1h-3zM28 34h3v1h-3zM34 34h2v1h-2zM38 34h2v1h-2zM41 34h3v1h-3zM1 35h5v1h-5zM7 35h3v1h-3zM12 35h1v1h-1zM14 35h2v1h-2zM20 35h1v1h-1zM22 35h5v1h-5zM32 35h1v1h-1zM34 35h1v1h-1zM41 35h1v1h-1zM4 36h3v1h-3zM8 36h2v1h-2zM13 36h3v1h-3zM17 36h1v1h-1zM20 36h6v1h-6zM28 36h2v1h-2zM31 36h3v1h-3zM36 36h7v1h-7zM13 37h1v1h-1zM15 37h1v1h-1zM17 37h1v1h-1zM19 37h2v1h-2zM24 37h1v1h-1zM26 37h7v1h-7zM34 37h3v1h-3zM40 37h2v1h-2zM0 38h7v1h-7zM8 38h1v1h-1zM10 38h3v1h-3zM18 38h1v1h-1zM20 38h1v1h-1zM22 38h1v1h-1zM24 38h2v1h-2zM29 38h4v1h-4zM34 38h1v1h-1zM36 38h1v1h-1zM38 38h1v1h-1zM40 38h5v1h-5zM0 39h1v1h-1zM6 39h1v1h-1zM8 39h2v1h-2zM11 39h5v1h-5zM18 39h1v1h-1zM20 39h1v1h-1zM24 39h1v1h-1zM26 39h1v1h-1zM30 39h1v1h-1zM33 39h2v1h-2zM36 39h1v1h-1zM40 39h1v1h-1zM42 39h3v1h-3zM0 40h1v1h-1zM2 40h3v1h-3zM6 40h1v1h-1zM8 40h1v1h-1zM10 40h2v1h-2zM14 40h1v1h-1zM20 40h5v1h-5zM27 40h1v1h-1zM34 40h11v1h-11zM0 41h1v1h-1zM2 41h3v1h-3zM6 41h1v1h-1zM8 41h4v1h-4zM13 41h1v1h-1zM19 41h2v1h-2zM22 41h1v1h-1zM25 41h1v1h-1zM29 41h1v1h-1zM34 41h1v1h-1zM37 41h1v1h-1zM39 41h3v1h-3zM43 41h2v1h-2zM0 42h1v1h-1zM2 42h3v1h-3zM6 42h1v1h-1zM8 42h2v1h-2zM11 42h1v1h-1zM13 42h4v1h-4zM20 42h3v1h-3zM26 42h1v1h-1zM30 42h4v1h-4zM0 43h1v1h-1zM6 43h1v1h-1zM8 43h1v1h-1zM12 43h3v1h-3zM18 43h1v1h-1zM22 43h5v1h-5zM29 43h4v1h-4zM37 43h2v1h-2zM43 43h2v1h-2zM0 44h7v1h-7zM9 44h4v1h-4zM14 44h1v1h-1zM16 44h1v1h-1zM18 44h2v1h-2zM21 44h1v1h-1zM23 44h2v1h-2zM29 44h1v1h-1zM32 44h1v1h-1zM34 44h1v1h-1zM37 44h2v1h-2zM41 44h2v1h-2zM44 44h1v1h-1z"/></svg>
<!--RG-END-->
<!--RT-START-->
<div class="rt" style="left:797.60px;top:281.86px;font-size:18.0px;line-height:18.0px;letter-spacing:-0.036px">Ambry Hill Technologies</div>
<div class="rt" style="left:797.40px;top:307.86px;font-size:18.0px;line-height:18.0px;letter-spacing:0.033px">134 Adams Street</div>
<div class="rt" style="left:797.00px;top:334.56px;font-size:18.0px;line-height:18.0px;letter-spacing:-0.113px">South Cambridge MN 55008</div>
<div class="rt" style="left:797.40px;top:362.46px;font-size:18.0px;line-height:18.0px;letter-spacing:-0.140px">United States America</div>
<div class="rt" style="left:797.40px;top:389.26px;font-size:18.0px;line-height:18.0px;letter-spacing:-0.036px">PH:612-367-8472</div>
<div class="rt" style="left:797.00px;top:415.06px;font-size:18.0px;line-height:18.0px;letter-spacing:-0.008px">ambryhill.com</div>
<div class="rt ps" style="left:1326.80px;top:280.98px;font-size:24px;line-height:24px;letter-spacing:0.473px">Packing Slip</div>
<div class="rt" style="left:1201.30px;top:314.16px;font-size:18.0px;line-height:18.0px;letter-spacing:0.500px;font-weight:700">INVC.:</div>
<div class="rt" style="left:1211.90px;top:342.06px;font-size:18.0px;line-height:18.0px;letter-spacing:0.225px;font-weight:700">Date:</div>
<div class="rt" style="left:1187.80px;top:369.86px;font-size:18.0px;line-height:18.0px;letter-spacing:-0.100px;font-weight:700">Contact</div>
<div class="rt" style="left:1253.20px;top:369.86px;font-size:18.0px;line-height:18.0px;letter-spacing:0.000px;font-weight:700">:</div>
<div class="rt" style="left:1198.60px;top:399.16px;font-size:18.0px;line-height:18.0px;letter-spacing:-0.360px;font-weight:700">Phone:</div>
<div class="rt clipr" style="left:1361.40px;top:314.16px;font-size:18.0px;line-height:18.0px;letter-spacing:0.400px;width:102.90px;overflow:hidden">INV-660-INV</div>
<div class="rt" style="left:1361.20px;top:342.06px;font-size:18.0px;line-height:18.0px;letter-spacing:-0.060px">Feb-20-2025</div>
<div class="rt" style="left:1272.20px;top:369.86px;font-size:18.0px;line-height:18.0px;letter-spacing:-0.041px">Ambry Hill Technologies</div>
<div class="rt" style="left:1351.80px;top:399.16px;font-size:18.0px;line-height:18.0px;letter-spacing:-0.018px">612-367-8472</div>
<div class="rt" style="left:410.20px;top:455.36px;font-size:18.0px;line-height:18.0px;letter-spacing:-0.229px;font-weight:700">Bill To:</div>
<div class="rt" style="left:410.10px;top:476.66px;font-size:18.0px;line-height:18.0px;letter-spacing:-0.138px">ATTN:  Josh Lewis</div>
<div class="rt" style="left:410.10px;top:496.56px;font-size:18.0px;line-height:18.0px;letter-spacing:-0.663px">Aero Co 1</div>
<div class="rt" style="left:409.10px;top:516.46px;font-size:18.0px;line-height:18.0px;letter-spacing:-0.161px">535 Cloudsdale Blvd</div>
<div class="rt" style="left:409.10px;top:536.96px;font-size:18.0px;line-height:18.0px;letter-spacing:0.012px">Chester, PA 19013</div>
<div class="rt" style="left:409.10px;top:555.76px;font-size:18.0px;line-height:18.0px;letter-spacing:0.150px">USA</div>
<div class="rt" style="left:943.20px;top:455.36px;font-size:18.0px;line-height:18.0px;letter-spacing:-0.171px;font-weight:700">Ship To:</div>
<div class="rt" style="left:943.10px;top:476.66px;font-size:18.0px;line-height:18.0px;letter-spacing:-0.137px">ATTN:  Josh Lewis</div>
<div class="rt" style="left:943.10px;top:496.56px;font-size:18.0px;line-height:18.0px;letter-spacing:-0.663px">Aero Co 1</div>
<div class="rt" style="left:942.10px;top:516.46px;font-size:18.0px;line-height:18.0px;letter-spacing:-0.161px">535 Cloudsdale Blvd</div>
<div class="rt" style="left:942.10px;top:536.96px;font-size:18.0px;line-height:18.0px;letter-spacing:0.012px">Chester, PA 19013</div>
<div class="rt" style="left:942.10px;top:555.76px;font-size:18.0px;line-height:18.0px;letter-spacing:0.150px">USA</div>
<div class="rt" style="left:408.70px;top:660.56px;font-size:18.0px;line-height:18.0px;letter-spacing:-0.267px;font-weight:700">Reference:</div>
<div class="rt" style="left:408.70px;top:685.36px;font-size:18.0px;line-height:18.0px;letter-spacing:-0.540px;font-weight:700">Buyer:</div>
<div class="rt" style="left:408.70px;top:710.36px;font-size:18.0px;line-height:18.0px;letter-spacing:-0.460px;font-weight:700">Phone:</div>
<div class="rt" style="left:408.70px;top:736.76px;font-size:18.0px;line-height:18.0px;letter-spacing:-0.220px;font-weight:700">Email:</div>
<div class="rt" style="left:408.70px;top:761.56px;font-size:18.0px;line-height:18.0px;letter-spacing:-0.238px;font-weight:700">Payment Terms:</div>
<div class="rt" style="left:408.90px;top:786.86px;font-size:18.0px;line-height:18.0px;letter-spacing:-0.090px;font-weight:700">VAT Number:</div>
<div class="rt" style="left:559.90px;top:660.56px;font-size:18.0px;line-height:18.0px;letter-spacing:-0.078px">AHT1923467</div>
<div class="rt" style="left:560.30px;top:685.36px;font-size:18.0px;line-height:18.0px;letter-spacing:-0.211px">Josh Lewis</div>
<div class="rt" style="left:559.30px;top:710.36px;font-size:18.0px;line-height:18.0px;letter-spacing:-0.164px">555-983-5284</div>
<div class="rt" style="left:562.10px;top:736.76px;font-size:18.0px;line-height:18.0px;letter-spacing:-0.229px">jlewis@aeroco1.com</div>
<div class="rt" style="left:559.80px;top:761.56px;font-size:18.0px;line-height:18.0px;letter-spacing:-0.067px">PREPAID</div>
<div class="rt" style="left:559.80px;top:786.86px;font-size:18.0px;line-height:18.0px;letter-spacing:-0.062px">123154665</div>
<div class="rt" style="left:942.80px;top:660.56px;font-size:18.0px;line-height:18.0px;letter-spacing:-0.656px;font-weight:700">Incoterms:</div>
<div class="rt" style="left:942.80px;top:685.36px;font-size:18.0px;line-height:18.0px;letter-spacing:-0.250px;font-weight:700">INCO Remarks:</div>
<div class="rt" style="left:942.80px;top:710.36px;font-size:18.0px;line-height:18.0px;letter-spacing:-0.357px;font-weight:700">Courier:</div>
<div class="rt" style="left:942.80px;top:736.76px;font-size:18.0px;line-height:18.0px;letter-spacing:-0.491px;font-weight:700">Ship Method:</div>
<div class="rt" style="left:942.80px;top:761.56px;font-size:18.0px;line-height:18.0px;letter-spacing:-0.186px;font-weight:700">Ship Act</div>
<div class="rt" style="left:1083.60px;top:660.56px;font-size:18.0px;line-height:18.0px;letter-spacing:-0.050px">CFR</div>
<div class="rt" style="left:1084.00px;top:685.36px;font-size:18.0px;line-height:18.0px;letter-spacing:-0.617px">MN. USA</div>
<div class="rt" style="left:1084.00px;top:710.36px;font-size:18.0px;line-height:18.0px;letter-spacing:-0.100px">UPS</div>
<div class="rt" style="left:1084.00px;top:736.76px;font-size:18.0px;line-height:18.0px;letter-spacing:-0.075px">OvernightStandard</div>
<div class="rt" style="left:1084.50px;top:761.56px;font-size:18.0px;line-height:18.0px;letter-spacing:0.486px">98898988</div>
<div class="rt" style="left:421.50px;top:837.06px;font-size:18.0px;line-height:18.0px;letter-spacing:0.067px;font-weight:700">Item</div>
<div class="rt" style="left:474.40px;top:837.06px;font-size:18.0px;line-height:18.0px;letter-spacing:-0.418px;font-weight:700">Part Number/Description</div>
<div class="rt" style="left:888.00px;top:837.06px;font-size:18.0px;line-height:18.0px;letter-spacing:2.300px;font-weight:700">CD</div>
<div class="rt" style="left:948.20px;top:837.06px;font-size:18.0px;line-height:18.0px;letter-spacing:-0.300px;font-weight:700">Qty Ordered</div>
<div class="rt" style="left:1074.80px;top:837.06px;font-size:18.0px;line-height:18.0px;letter-spacing:-0.480px;font-weight:700">Qty Shipped</div>
<div class="rt" style="left:1265.70px;top:837.06px;font-size:18.0px;line-height:18.0px;letter-spacing:-0.355px;font-weight:700">Manufacturer</div>
<div class="rt" style="left:433.30px;top:867.96px;font-size:18.0px;line-height:18.0px;letter-spacing:0.000px">1</div>
<div class="rt" style="left:474.40px;top:867.96px;font-size:18.0px;line-height:18.0px;letter-spacing:-0.064px;font-weight:700">HAZ PACKING / HAZARD MATERIAL PACKING</div>
<div class="rt" style="left:887.00px;top:867.96px;font-size:18.0px;line-height:18.0px;letter-spacing:0.300px">NE</div>
<div class="rt" style="left:1037.30px;top:867.96px;font-size:18.0px;line-height:18.0px;letter-spacing:0.000px">1</div>
<div class="rt" style="left:1162.30px;top:867.96px;font-size:18.0px;line-height:18.0px;letter-spacing:0.000px">0</div>
<div class="rt" style="left:1304.00px;top:868.76px;font-size:18.0px;line-height:18.0px;letter-spacing:0.300px">3M</div>
<div class="rt" style="left:1012.60px;top:761.56px;font-size:18.0px;line-height:18.0px;letter-spacing:0.000px;font-weight:700">:</div>
<div class="rt" style="left:474.60px;top:892.86px;font-size:18.0px;line-height:18.0px;letter-spacing:-0.080px">Notes:</div>
<div class="rt" style="left:474.60px;top:913.16px;font-size:18.0px;line-height:18.0px;letter-spacing:-0.186px">For the battery</div>
<div class="rt" style="left:432.75px;top:962.16px;font-size:18.0px;line-height:18.0px;letter-spacing:0.000px">2</div>
<div class="rt" style="left:474.40px;top:962.16px;font-size:18.0px;line-height:18.0px;letter-spacing:0.048px;font-weight:700">AOG FEE / EXPEDITE FEE</div>
<div class="rt" style="left:887.00px;top:962.16px;font-size:18.0px;line-height:18.0px;letter-spacing:0.300px">NE</div>
<div class="rt" style="left:1037.30px;top:962.16px;font-size:18.0px;line-height:18.0px;letter-spacing:0.000px">1</div>
<div class="rt" style="left:1162.30px;top:962.16px;font-size:18.0px;line-height:18.0px;letter-spacing:0.000px">0</div>
<div class="rt" style="left:1316.50px;top:976.46px;font-size:18.0px;line-height:18.0px;letter-spacing:0.000px">-</div>
<div class="rt" style="left:474.60px;top:985.66px;font-size:18.0px;line-height:18.0px;letter-spacing:-0.080px">Notes:</div>
<div class="rt" style="left:474.60px;top:1007.36px;font-size:18.0px;line-height:18.0px;letter-spacing:-0.082px">Expedite overnight</div>
<!--RT-END-->
</div></div>
   <div class="abs" style="left:1187px;top:0;width:27px;height:889px;background:linear-gradient(90deg,rgba(0,0,0,0),rgba(0,0,0,.085))"></div>
  </div>
 </div>
</div>

<!-- LIVE CHAT -->
<div class="abs" style="left:10px;top:997px;width:40px;height:73px;background:#fff;border:3px solid #f0a11f;border-radius:5px;overflow:hidden">
  <div class="abs" style="left:0;top:1px;width:34px;text-align:center;font-size:12.500px;line-height:14.200px;font-weight:700;color:#0a0a0a;letter-spacing:-.2px">LIVE<br>CHAT</div>
  <svg class="abs" style="left:-4px;top:27px" width="46" height="44" viewBox="0 0 40 40" preserveAspectRatio="none">
    <path d="M1 8Q1 3 6 3l13-1q5 0 6 5l1 12q0 5-5 6l-14 2q-5 0-6-4z" fill="#f0a11f"/>
    <path d="M3 10q0-3 3-3l12-1q3 0 4 3l1 9q0 3-3 4l-12 2q-4 0-4-3z" fill="#fff"/>
    <ellipse cx="9" cy="13.500" rx="1.800" ry="1.500" fill="#b5651d"/><ellipse cx="18.500" cy="12.500" rx="1.800" ry="1.500" fill="#b5651d"/>
    <path d="M11 19q3.500 2 7-.5" stroke="#222" stroke-width="1" fill="none"/>
    <path d="M24 3l1 8M24.500 3a1 1 0 1 1 .1 0" stroke="#999" stroke-width="1.200" fill="#fff"/>
    <path d="M29 18l11-3v8l-10 9-11 3z" fill="#f0a11f"/><path d="M29 18l-10 17-3-1 11-16z" fill="#fff" stroke="#555" stroke-width=".5"/>
    <path d="M0 27q6 2 9 6l10 2-6 3q-7 1-13-3z" fill="#f0a11f"/><path d="M1 26l8 5-1 2-8-4z" fill="#fff" stroke="#666" stroke-width=".4"/>
    <ellipse cx="12" cy="28.500" rx="4" ry="2.500" fill="#fff"/>
  </svg>
</div>
<!-- page scrollbar -->
<div class="abs" style="left:1915.200px;top:0;width:3.200px;height:1030px;background:#cfcfcf;border-radius:2px"></div>
</body>
</html>
